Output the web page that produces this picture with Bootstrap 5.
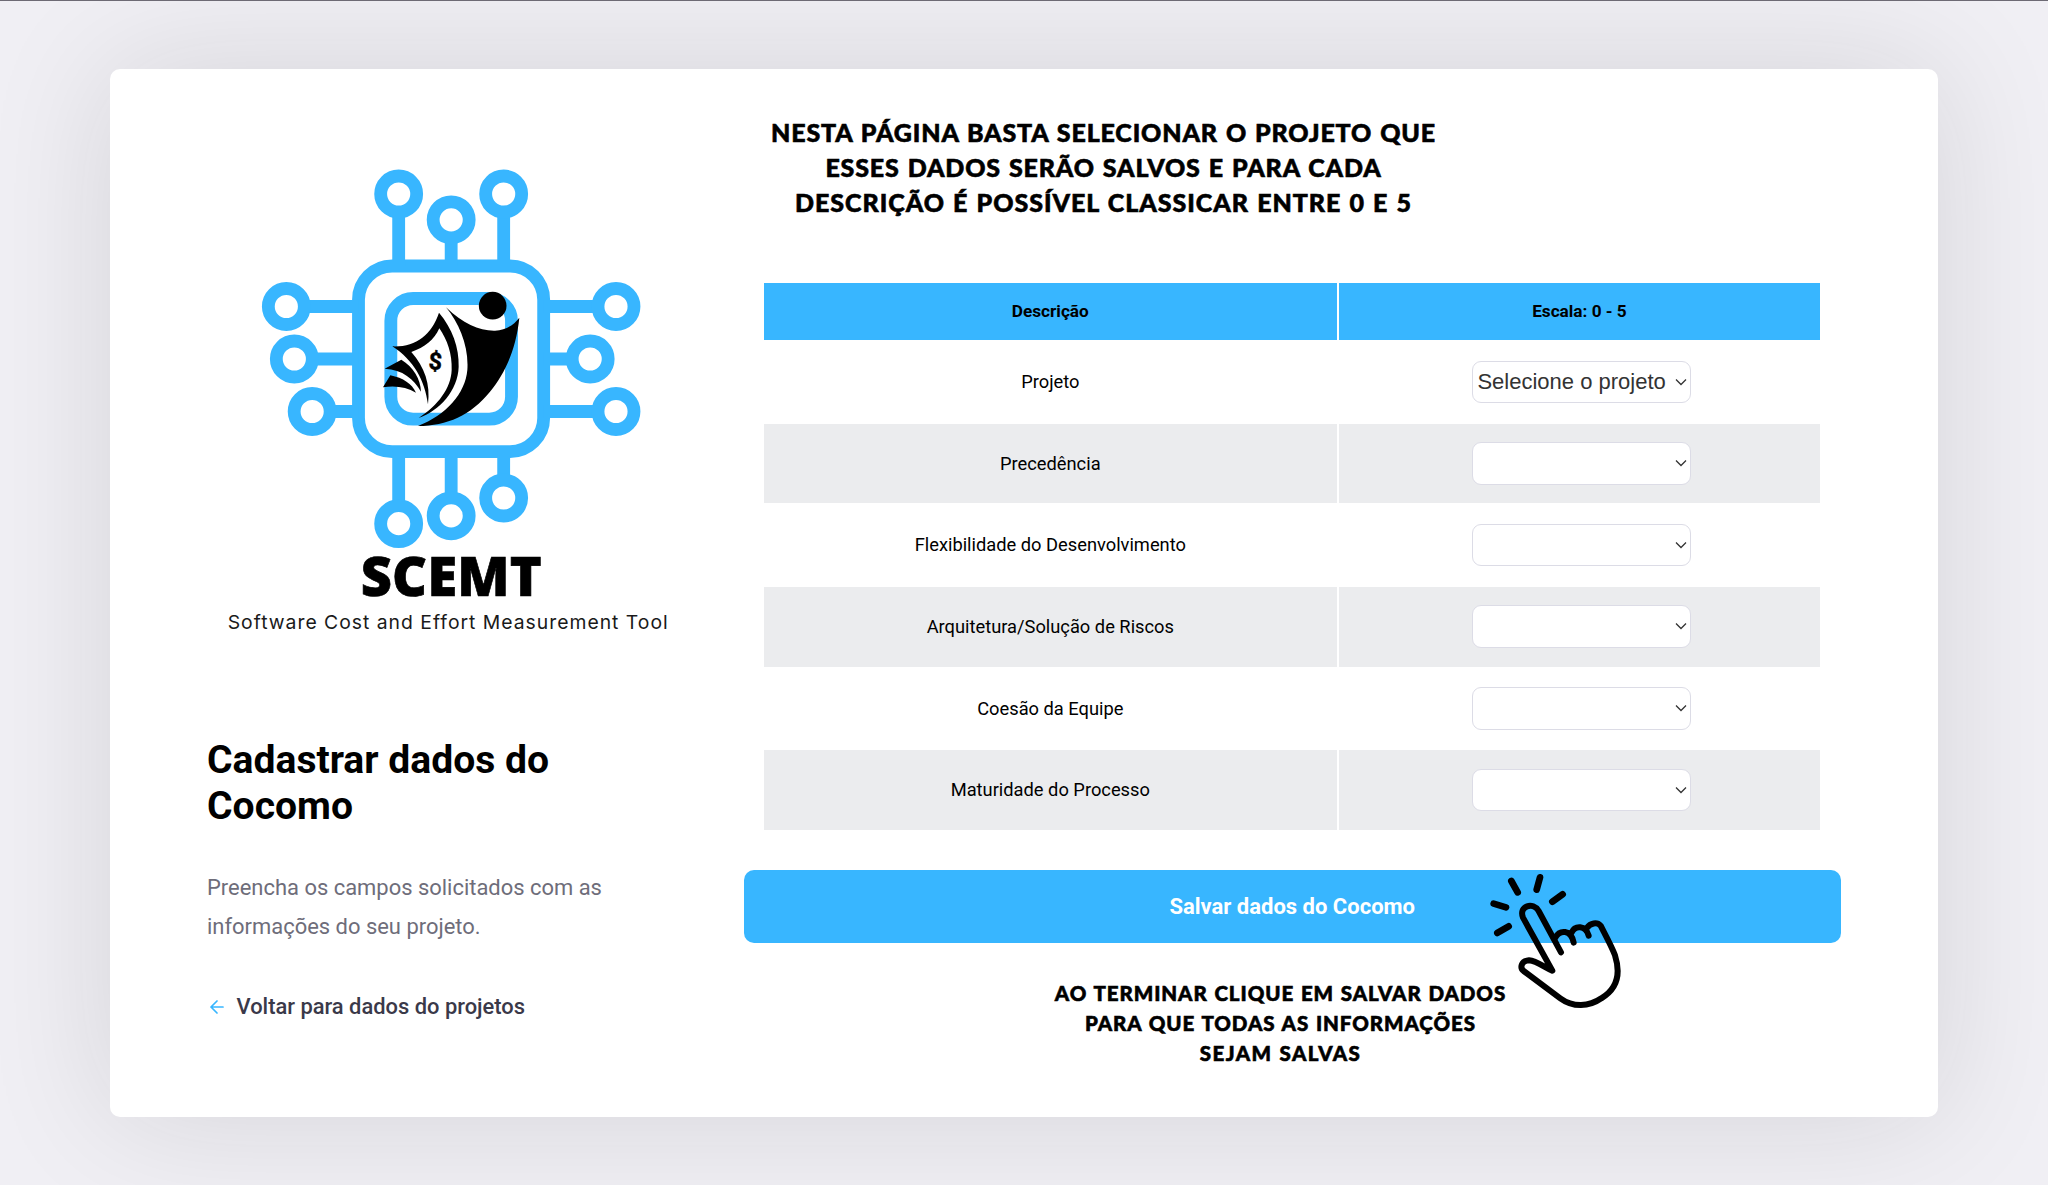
<!DOCTYPE html>
<html lang="pt-BR">
<head>
<meta charset="utf-8">
<title>Cadastrar dados do Cocomo</title>
<link href="https://cdn.jsdelivr.net/npm/bootstrap@5.3.0/dist/css/bootstrap.min.css" rel="stylesheet">
<style>
body{font-family:Roboto,sans-serif;background:#f0eff4;height:1185px;overflow:hidden;border-top:1px solid #6d6a74;color:#000}
.page-card{width:1828px;height:1048px;margin:68px 0 0 110px;background:#fff;border-radius:10px;box-shadow:0 0 130px rgba(22,22,24,.12);padding:0 97px}
.side{width:480px;padding-top:91px}
.side h1{font-size:39.1px;font-weight:700;line-height:46px;margin:100px 0 0;width:400px}
.side p{font-size:21.95px;line-height:39px;color:#6e6d7a;margin:38.5px 0 0;width:430px}
.back-link{font-size:21.9px;line-height:33px;font-weight:500;color:#3a3949;margin-top:44.5px;padding-left:3px;gap:12.5px}
.main-col{width:1097.5px;margin-left:56.5px}
.hint{font-family:Lato,sans-serif;font-weight:900;text-align:center;white-space:nowrap;-webkit-text-stroke:.6px #000}
.hint-top{width:720px;font-size:25px;line-height:35px;letter-spacing:.85px;word-spacing:1.2px;padding-top:46px}
.hint-top div:last-child{letter-spacing:.98px}
.hint-end{width:1074px;font-size:20.5px;line-height:30px;letter-spacing:.93px;word-spacing:1px;margin-top:35px}
.hint-end div:last-child{letter-spacing:1.4px}
.grid-table{width:1060.3px;margin:61px 0 0 18.5px;table-layout:fixed;border-collapse:separate;border-spacing:2.4px;font-size:18.3px;text-align:center}
.grid-table th{background:#38b6ff;height:57px;font-size:17.2px;padding:0}
.grid-table th:first-child{width:572.6px}
.grid-table td{height:79.65px;padding:0}
.grid-table td+td{padding-left:4px}
.grid-table tbody tr:nth-child(even) td{background:#ebecee}
.pick{position:relative;width:219px}
.pick select{font-family:"Liberation Sans",Arial,sans-serif;width:219px;height:42.5px;font-size:22px;line-height:30px;border:1px solid #dcdce6;border-radius:9px;padding:0 18px 0 4.5px;color:#333;background:#fff;appearance:none;display:block}
.pick svg{position:absolute;right:4px;top:17px}
.btn-save,.btn-save:hover{height:73px;width:1097.5px;border-radius:10px;background:#38b6ff;color:#fff;font-size:22px;font-weight:700;border:0}
.save-row{margin-top:38.5px}
.hand{position:absolute;left:744.5px;top:2px}
</style>
</head>
<body>
<main class="page-card d-flex">
  <section class="side">
    <svg class="d-block" width="480" height="477" viewBox="21 60 1440 1431">
      <g fill="none" stroke="#38b6ff" stroke-width="38.5">
        <rect x="475.5" y="378" width="555.5" height="557" rx="101"/>
        <rect x="572.5" y="475.5" width="362" height="362" rx="67"/>
        <path d="M596 216V378M753.500 294V378M911 216V378M596 935V1098M753.500 935V1074M911 935V1020M312 499.500H475M336 657H475M390 814.500H475M1031 499.500H1194M1031 657H1116M1031 814.500H1194"/>
        <circle cx="596" cy="162" r="54"/><circle cx="753.500" cy="239.500" r="54"/><circle cx="911" cy="162" r="54"/>
        <circle cx="259" cy="499.500" r="54"/><circle cx="283" cy="657" r="54"/><circle cx="336.500" cy="814.500" r="54"/>
        <circle cx="1248" cy="499.500" r="54"/><circle cx="1170.500" cy="657" r="54"/><circle cx="1248" cy="814.500" r="54"/>
        <circle cx="596" cy="1151" r="54"/><circle cx="753.500" cy="1127.500" r="54"/><circle cx="911" cy="1074" r="54"/>
      </g>
      <circle cx="878" cy="497" r="41.500"/>
      <path d="M738 502C790 552 838 573 885 572C920 570 942 554 958 533C948 632 912 705 870 755C812 826 742 857 654 858C738 826 796 760 802 690C807 620 778 550 738 502Z"/>
      <path fill-rule="evenodd" d="M717 518C757 566 778 622 776 680C774 752 718 812 656 834C714 796 753 745 755 690C757 642 742 600 718 565C702 600 674 622 634 636C674 682 692 732 684 793C674 720 642 662 577 619C646 622 694 586 717 518Z"/>
      <path d="M604 659L554 686C608 688 642 718 663 755C662 718 640 680 604 659ZM571 706L549 742C585 736 620 741 648 758C636 732 610 714 571 706Z"/>
      <text x="706" y="688" font-family="Roboto, sans-serif" font-weight="700" font-size="70" text-anchor="middle" stroke="#000" stroke-width="1.500" transform="rotate(3 706 665)">$</text>
      <text x="482" y="1368" font-family="Open Sans, sans-serif" font-weight="800" font-size="162" textLength="543" stroke="#000" stroke-width="2">SCEMT</text>
      <text x="83" y="1467" font-family="Inter, sans-serif" font-size="58" textLength="1320" fill="#1a1a1a">Software Cost and Effort Measurement Tool</text>
    </svg>
    <h1>Cadastrar dados do Cocomo</h1>
    <p>Preencha os campos solicitados com as informações do seu projeto.</p>
    <a class="back-link d-flex align-items-center text-decoration-none" href="#">
      <svg width="14" height="14" viewBox="0 0 14 14" fill="none" stroke="#38b6ff" stroke-width="1.700" stroke-linecap="round" stroke-linejoin="round"><path d="M13 7H1M7 1L1 7L7 13"/></svg>
      <span>Voltar para dados do projetos</span>
    </a>
  </section>
  <section class="main-col">
    <div class="hint hint-top">
      <div>NESTA PÁGINA BASTA SELECIONAR O PROJETO QUE</div>
      <div>ESSES DADOS SERÃO SALVOS E PARA CADA</div>
      <div>DESCRIÇÃO É POSSÍVEL CLASSICAR ENTRE 0 E 5</div>
    </div>
    <table class="grid-table">
      <thead><tr><th>Descrição</th><th>Escala: 0 - 5</th></tr></thead>
      <tbody>
        <tr><td>Projeto</td><td><div class="pick mx-auto"><select><option>Selecione o projeto</option></select><svg width="12" height="8" viewBox="0 0 12 8" fill="none" stroke="#333" stroke-width="1.300"><path d="M1 1.500L6 6.500L11 1.500"/></svg></div></td></tr>
        <tr><td>Precedência</td><td><div class="pick mx-auto"><select><option></option></select><svg width="12" height="8" viewBox="0 0 12 8" fill="none" stroke="#333" stroke-width="1.300"><path d="M1 1.500L6 6.500L11 1.500"/></svg></div></td></tr>
        <tr><td>Flexibilidade do Desenvolvimento</td><td><div class="pick mx-auto"><select><option></option></select><svg width="12" height="8" viewBox="0 0 12 8" fill="none" stroke="#333" stroke-width="1.300"><path d="M1 1.500L6 6.500L11 1.500"/></svg></div></td></tr>
        <tr><td>Arquitetura/Solução de Riscos</td><td><div class="pick mx-auto"><select><option></option></select><svg width="12" height="8" viewBox="0 0 12 8" fill="none" stroke="#333" stroke-width="1.300"><path d="M1 1.500L6 6.500L11 1.500"/></svg></div></td></tr>
        <tr><td>Coesão da Equipe</td><td><div class="pick mx-auto"><select><option></option></select><svg width="12" height="8" viewBox="0 0 12 8" fill="none" stroke="#333" stroke-width="1.300"><path d="M1 1.500L6 6.500L11 1.500"/></svg></div></td></tr>
        <tr><td>Maturidade do Processo</td><td><div class="pick mx-auto"><select><option></option></select><svg width="12" height="8" viewBox="0 0 12 8" fill="none" stroke="#333" stroke-width="1.300"><path d="M1 1.500L6 6.500L11 1.500"/></svg></div></td></tr>
      </tbody>
    </table>
    <div class="save-row position-relative">
      <button class="btn btn-save">Salvar dados do Cocomo</button>
      <svg class="hand" width="135" height="138.330" viewBox="265 95 405 415" fill="none" stroke="#000" stroke-width="18" stroke-linecap="round" stroke-linejoin="round">
        <path d="M484 336L417 212C401 184 356 196 370 232L458 391C432 380 412 362 388 360C364 362 360 382 372 392L482 474C520 502 568 500 605 474C652 446 664 402 646 345C636 318 614 278 603 256C592 244 572 248 562 262"/>
        <path d="M467 292C480 268 514 266 522 307M515 278C526 254 558 254 567 286"/>
        <path stroke-width="20" d="M335 122L354 156M421 111L411 148M489 162L458 184M282 190L319 201M293 278L327 258"/>
      </svg>
    </div>
    <div class="hint hint-end">
      <div>AO TERMINAR CLIQUE EM SALVAR DADOS</div>
      <div>PARA QUE TODAS AS INFORMAÇÕES</div>
      <div>SEJAM SALVAS</div>
    </div>
  </section>
</main>
<script src="https://cdn.jsdelivr.net/npm/bootstrap@5.3.0/dist/js/bootstrap.bundle.min.js"></script>
</body>
</html>
